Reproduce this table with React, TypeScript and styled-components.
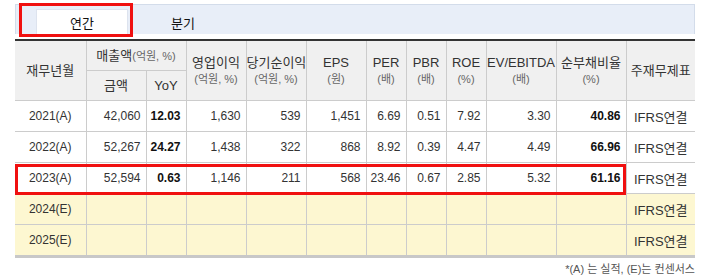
import styled, { createGlobalStyle } from 'styled-components';

const GlobalStyle = createGlobalStyle`
  body {
    margin: 0;
    background: #fff;
    font-family: "Liberation Sans", "Noto Sans CJK KR", sans-serif;
    color: #333;
  }
`;

type Row = {
  year: string;
  estimate?: boolean;
  values: string[];
};

const rows: Row[] = [
  { year: '2021(A)', values: ['42,060', '12.03', '1,630', '539', '1,451', '6.69', '0.51', '7.92', '3.30', '40.86'] },
  { year: '2022(A)', values: ['52,267', '24.27', '1,438', '322', '868', '8.92', '0.39', '4.47', '4.49', '66.96'] },
  { year: '2023(A)', values: ['52,594', '0.63', '1,146', '211', '568', '23.46', '0.67', '2.85', '5.32', '61.16'] },
  { year: '2024(E)', estimate: true, values: ['', '', '', '', '', '', '', '', '', ''] },
  { year: '2025(E)', estimate: true, values: ['', '', '', '', '', '', '', '', '', ''] },
];

const widths = [71, 60, 40, 60, 60, 60, 40, 40, 40, 70, 70, 69];
const boldCols = [1, 9];

const App = () => {
  return (
    <>
      <GlobalStyle />
      <Wrapper>
        <TabBar>
          <Tab $active>연간</Tab>
          <Tab>분기</Tab>
          <TabMark />
        </TabBar>
        <TableBox>
          <Table>
            <colgroup>
              {widths.map((w, i) => (
                <col key={i} style={{ width: w }} />
              ))}
            </colgroup>
            <thead>
              <tr>
                <Th rowSpan={2}>재무년월</Th>
                <Th colSpan={2}>
                  매출액<Unit>(억원, %)</Unit>
                </Th>
                <Th rowSpan={2}>
                  영업이익
                  <SubUnit>(억원, %)</SubUnit>
                </Th>
                <Th rowSpan={2}>
                  당기순이익
                  <SubUnit>(억원, %)</SubUnit>
                </Th>
                <Th rowSpan={2}>
                  EPS
                  <SubUnit>(원)</SubUnit>
                </Th>
                <Th rowSpan={2}>
                  PER
                  <SubUnit>(배)</SubUnit>
                </Th>
                <Th rowSpan={2}>
                  PBR
                  <SubUnit>(배)</SubUnit>
                </Th>
                <Th rowSpan={2}>
                  ROE
                  <SubUnit>(%)</SubUnit>
                </Th>
                <Th rowSpan={2}>
                  EV/EBITDA
                  <SubUnit>(배)</SubUnit>
                </Th>
                <Th rowSpan={2}>
                  순부채비율
                  <SubUnit>(%)</SubUnit>
                </Th>
                <Th rowSpan={2}>주재무제표</Th>
              </tr>
              <tr>
                <Th>금액</Th>
                <Th>YoY</Th>
              </tr>
            </thead>
            <tbody>
              {rows.map((row) => (
                <Tr key={row.year} $estimate={row.estimate}>
                  <Td $center>{row.year}</Td>
                  {row.values.map((v, i) => (
                    <Td key={i} $bold={boldCols.includes(i)}>
                      {v}
                    </Td>
                  ))}
                  <Td $center>IFRS연결</Td>
                </Tr>
              ))}
            </tbody>
          </Table>
          <RowMark />
        </TableBox>
        <Note>*(A) 는 실적, (E)는 컨센서스</Note>
      </Wrapper>
    </>
  );
};

export default App;

const Wrapper = styled.div`
  width: 680px;
  padding: 4px 0 0 15px;
`;

const TabBar = styled.div`
  position: relative;
  display: flex;
  gap: 9px;
  height: 30px;
  box-sizing: border-box;
  padding: 4px 0 0 20px;
  background: #e8eef8;
  border: 1px solid #d3dcea;
  border-bottom: none;
`;

const Tab = styled.div<{ $active?: boolean }>`
  width: 92px;
  height: 25px;
  box-sizing: border-box;
  display: flex;
  align-items: center;
  justify-content: center;
  font-size: 13px;
  color: #111;
  background: ${(p) => (p.$active ? '#fff' : 'transparent')};
  border: 1px solid ${(p) => (p.$active ? '#dde3ee' : 'transparent')};
  border-bottom: none;
`;

const TabMark = styled.div`
  position: absolute;
  left: 3px;
  top: -2px;
  width: 114px;
  height: 34px;
  box-sizing: border-box;
  border: 3px solid #f01010;
`;

const TableBox = styled.div`
  position: relative;
  margin-top: 5px;
  border-top: 2px solid #333;
`;

const Table = styled.table`
  width: 680px;
  table-layout: fixed;
  border-collapse: collapse;
  font-size: 12px;
  border-bottom: 3px solid #c8c8c8;
`;

const Th = styled.th`
  height: 29px;
  padding: 0;
  background: #f0f0f0;
  border: 1px solid #cccccc;
  border-top: none;
  font-weight: normal;
  font-size: 13px;
  color: #333;
  text-align: center;
  line-height: 16px;
  white-space: nowrap;
  &:first-child {
    border-left: none;
  }
  tr:first-child &:last-child {
    border-right: none;
  }
`;

const Unit = styled.span`
  font-size: 11px;
  color: #666;
`;

const SubUnit = styled.div`
  font-size: 11px;
  color: #666;
`;

const Tr = styled.tr<{ $estimate?: boolean }>`
  background: ${(p) => (p.$estimate ? '#fdf7d1' : '#fff')};
`;

const Td = styled.td<{ $center?: boolean; $bold?: boolean }>`
  height: 30px;
  padding: 0 5px 0 0;
  border: 1px solid #cccccc;
  text-align: ${(p) => (p.$center ? 'center' : 'right')};
  font-weight: ${(p) => (p.$bold ? 'bold' : 'normal')};
  color: ${(p) => (p.$bold ? '#111' : '#333')};
  white-space: nowrap;
  &:first-child {
    border-left: none;
    padding: 0;
  }
  &:last-child {
    border-right: none;
    padding: 0;
    font-size: 13px;
  }
`;

const RowMark = styled.div`
  position: absolute;
  left: 0;
  top: 123px;
  width: 611px;
  height: 31px;
  box-sizing: border-box;
  border: 3px solid #f01010;
`;

const Note = styled.div`
  margin-top: 2px;
  text-align: right;
  font-size: 11px;
  color: #555;
`;
